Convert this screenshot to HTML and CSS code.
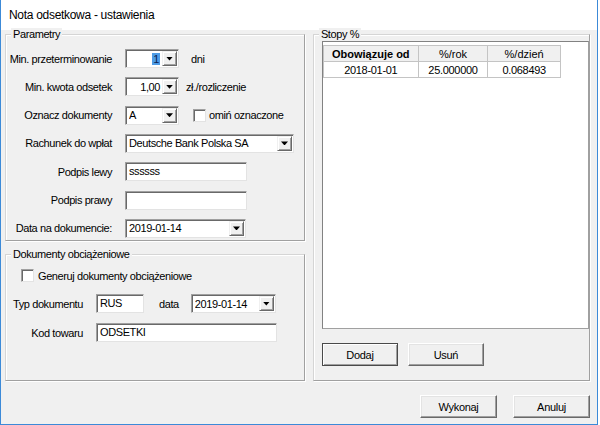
FILE: index.html
```html
<!DOCTYPE html>
<html lang="pl">
<head>
  <meta charset="UTF-8" />
  <meta name="viewport" content="width=device-width, initial-scale=1.0"/>
  <title>Nota odsetkowa - ustawienia</title>
  <link rel="stylesheet" href="styles.css">
</head>
<body>

  <div class="window">
    <div class="titlebar">Nota odsetkowa - ustawienia</div>

    <div class="client">
      <div class="columns">

        <div class="left">
          <div class="group params">
            <div class="group-title">Parametry</div>
            <div class="form">
              <span class="lbl">Min. przeterminowanie</span>
              <div class="line">
                <div class="combo small right"><span class="val"><span class="sel">1</span></span><span class="drop"></span></div>
                <span class="unit days">dni</span>
              </div>

              <span class="lbl">Min. kwota odsetek</span>
              <div class="line">
                <div class="combo small right"><span class="val">1,00</span><span class="drop"></span></div>
                <span class="unit money">zł./rozliczenie</span>
              </div>

              <span class="lbl">Oznacz dokumenty</span>
              <div class="line">
                <div class="combo small"><span class="val">A</span><span class="drop"></span></div>
                <span class="check skip"></span>
                <span class="check-text">omiń oznaczone</span>
              </div>

              <span class="lbl">Rachunek do wpłat</span>
              <div class="line">
                <div class="combo bank"><span class="val">Deutsche Bank Polska SA</span><span class="drop"></span></div>
              </div>

              <span class="lbl">Podpis lewy</span>
              <div class="line">
                <div class="edit sign">ssssss</div>
              </div>

              <span class="lbl">Podpis prawy</span>
              <div class="line">
                <div class="edit sign"></div>
              </div>

              <span class="lbl">Data na dokumencie:</span>
              <div class="line">
                <div class="combo date"><span class="val">2019-01-14</span><span class="drop"></span></div>
              </div>
            </div>
          </div>

          <div class="group docs">
            <div class="group-title">Dokumenty obciążeniowe</div>
            <div class="gen">
              <span class="check"></span>
              <span>Generuj dokumenty obciążeniowe</span>
            </div>
            <div class="form docs-form">
              <span class="lbl">Typ dokumentu</span>
              <div class="line">
                <div class="edit type">RUS</div>
                <span class="unit date-lbl">data</span>
                <div class="combo doc-date"><span class="val">2019-01-14</span><span class="drop"></span></div>
              </div>

              <span class="lbl">Kod towaru</span>
              <div class="line">
                <div class="edit code">ODSETKI</div>
              </div>
            </div>
          </div>
        </div>

        <div class="group rates">
          <div class="group-title">Stopy %</div>
          <div class="list">
            <table class="grid">
              <tr>
                <th class="bold">Obowiązuje od</th>
                <th>%/rok</th>
                <th>%/dzień</th>
              </tr>
              <tr>
                <td>2018-01-01</td>
                <td>25.000000</td>
                <td>0.068493</td>
              </tr>
            </table>
          </div>
          <div class="list-btns">
            <button class="btn default">Dodaj</button>
            <button class="btn">Usuń</button>
          </div>
        </div>

      </div>

      <div class="footer">
        <button class="btn wide">Wykonaj</button>
        <button class="btn wide">Anuluj</button>
      </div>
    </div>
  </div>

</body>
</html>
```

FILE: styles.css
```css
* {
  box-sizing: border-box;
}

body {
  margin: 0;
  background: #ffffff;
  font-family: 'Liberation Sans', Arial, sans-serif;
  font-size: 11px;
  letter-spacing: -0.4px;
  color: #000;
}

.window {
  width: 598px;
  height: 425px;
  border: 1px solid #3c8ad8;
  border-top: none;
  background: #f0f0f0;
  display: flex;
  flex-direction: column;
}

.titlebar {
  height: 30px;
  line-height: 30px;
  padding-left: 8px;
  background: #ffffff;
  font-size: 12px;
  letter-spacing: -0.3px;
}

.client {
  flex: 1;
  padding: 4px 7px 0 4px;
}

.columns {
  display: flex;
  gap: 8px;
}

.left {
  width: 302px;
  display: flex;
  flex-direction: column;
  gap: 13px;
}

/* group boxes */
.group {
  border: 1px solid;
  border-color: #d5d5d5 #a0a0a0 #a0a0a0 #d5d5d5;
  box-shadow: 1px 1px 0 #ffffff, inset 1px 1px 0 #ffffff;
}

.group-title {
  width: max-content;
  margin: -7px 0 0 5px;
  padding: 0 2px;
  line-height: 13px;
  background: #f0f0f0;
}

.params {
  height: 207px;
}

.docs {
  height: 127px;
}

.rates {
  width: 279px;
  height: 347px;
}

/* form rows */
.form {
  display: grid;
  grid-template-columns: 106px 1fr;
  grid-auto-rows: 19px;
  column-gap: 13px;
  row-gap: 9.33px;
  align-items: center;
  margin-top: 8px;
}

.lbl {
  text-align: right;
  white-space: nowrap;
}

.line {
  display: flex;
  align-items: center;
  height: 19px;
}

.combo,
.edit {
  height: 19px;
  background: #ffffff;
  border: 1px solid;
  border-color: #a0a0a0 #e3e3e3 #e3e3e3 #a0a0a0;
  box-shadow: inset 1px 1px 0 #696969;
}

.combo {
  display: flex;
  align-items: center;
  padding: 0 1px 0 3px;
}

.combo .val {
  flex: 1;
  white-space: nowrap;
  overflow: hidden;
}

.combo.right .val {
  text-align: right;
  padding-right: 2px;
}

.sel {
  background: #4d9be6;
  color: #0b2250;
  padding: 0 1px;
}

.drop {
  width: 15px;
  height: 15px;
  flex: none;
  display: flex;
  align-items: center;
  justify-content: center;
  background: #f0f0f0;
  border: 1px solid;
  border-color: #f0f0f0 #696969 #696969 #f0f0f0;
  box-shadow: inset 1px 1px 0 #ffffff, inset -1px -1px 0 #a0a0a0;
}

.drop::after {
  content: "";
  width: 7px;
  height: 4px;
  background: #000;
  clip-path: polygon(0 0, 100% 0, 50% 100%);
}

.small { width: 54px; }
.bank { width: 169px; }
.date { width: 121px; }
.sign { width: 122px; }

.edit {
  padding-left: 3px;
  line-height: 17px;
  white-space: nowrap;
}

.unit.days { margin-left: 12px; }
.unit.money { margin-left: 7px; }

.check {
  width: 13px;
  height: 13px;
  flex: none;
  background: #ffffff;
  border: 1px solid;
  border-color: #a0a0a0 #e3e3e3 #e3e3e3 #a0a0a0;
  box-shadow: inset 1px 1px 0 #696969;
}

.check.skip {
  margin-left: 14px;
}

.check-text {
  margin-left: 3px;
  white-space: nowrap;
}

/* dokumenty */
.gen {
  display: flex;
  align-items: center;
  gap: 4px;
  height: 13px;
  margin: 8px 0 0 15px;
}

.docs-form {
  grid-template-columns: 77px 1fr;
  row-gap: 10px;
  margin-top: 12px;
}

.type { width: 48px; }
.date-lbl { margin-left: 15px; }
.doc-date { width: 85px; margin-left: 12px; }
.code { width: 181px; }

/* stopy */
.list {
  width: 267px;
  height: 288px;
  margin-left: 8px;
  padding-top: 3px;
  background: #ffffff;
  border: 1px solid;
  border-color: #828282 #a0a0a0 #a0a0a0 #828282;
}

.grid {
  border-collapse: collapse;
  width: 238px;
}

.grid th,
.grid td {
  height: 16px;
  padding: 0;
  text-align: center;
  font-weight: normal;
  border: 1px solid #c4c4c4;
  white-space: nowrap;
  letter-spacing: -0.3px;
}

.grid th {
  background: #f0f0f0;
  letter-spacing: 0;
}

.grid th:nth-child(1) { width: 95px; }
.grid th:nth-child(2) { width: 70px; }
.grid th:nth-child(3) { width: 73px; }

.grid th.bold {
  font-weight: bold;
}

.list-btns {
  display: flex;
  gap: 10px;
  margin: 14px 0 0 8px;
}

/* buttons */
.btn {
  width: 76px;
  height: 23px;
  padding: 0;
  font-family: inherit;
  font-size: 11px;
  letter-spacing: -0.3px;
  color: #000;
  background: #f0f0f0;
  border: 1px solid;
  border-color: #ffffff #696969 #696969 #ffffff;
  box-shadow: inset -1px -1px 0 #a0a0a0, inset 1px 1px 0 #e3e3e3;
}

.btn.default {
  border-color: #4a4a4a;
  box-shadow: inset 1px 1px 0 #ffffff, inset -1px -1px 0 #a0a0a0;
}

.btn.wide {
  width: 77px;
}

.footer {
  display: flex;
  justify-content: flex-end;
  gap: 16px;
  margin-top: 14px;
}
```
